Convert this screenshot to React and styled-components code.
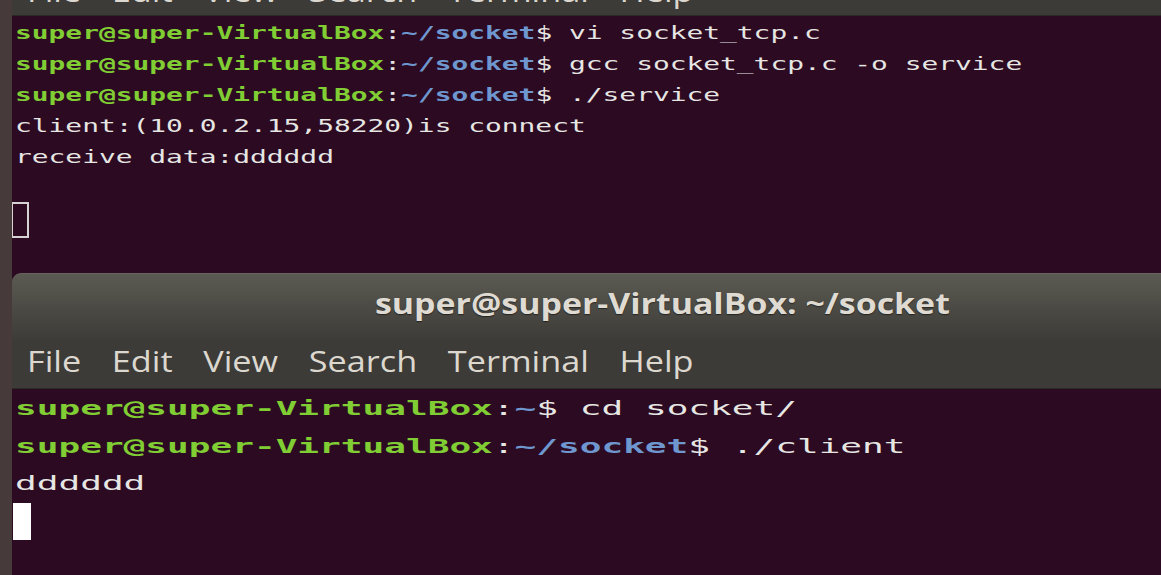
import React from 'react'
import styled, { createGlobalStyle } from 'styled-components'

const GlobalStyle = createGlobalStyle`
  html, body {
    margin: 0;
    padding: 0;
    background: #2c0a22;
    overflow: hidden;
  }
`

const Screen = styled.div`
  display: flex;
  width: 1161px;
  height: 575px;
  overflow: hidden;
  background: #2c0a22;
`

const Strip = styled.div`
  width: 12px;
  flex-shrink: 0;
  background: #463a3a;
`

const Main = styled.div`
  flex: 1;
  display: flex;
  flex-direction: column;
  min-width: 0;
`

const MenuBar = styled.div`
  height: ${p => p.h}px;
  flex-shrink: 0;
  background: #3c3b37;
  overflow: hidden;
  padding-left: 15px;
  border-bottom: 1px solid #2a2a27;
`

const MenuRow = styled.div`
  display: flex;
  align-items: center;
  gap: 26px;
  height: 48px;
  margin-top: ${p => p.shift || 0}px;
  transform: scaleX(1.18);
  transform-origin: left center;
  font-family: "Open Sans", "Noto Sans", sans-serif;
  font-size: 29px;
  color: #dcd8cf;
`

const MenuItem = styled.span`
  white-space: nowrap;
`

const Terminal = styled.div`
  background: #2c0a22;
  overflow: hidden;
  padding: ${p => p.pt}px 0 0 3px;
  height: ${p => (p.h ? `${p.h}px` : 'auto')};
  flex: ${p => (p.h ? '0 0 auto' : '1')};
  box-sizing: border-box;
`

const Line = styled.div`
  height: ${p => p.lh}px;
  line-height: ${p => p.lh}px;
  white-space: pre;
  font-family: "DejaVu Sans Mono", "Liberation Mono", monospace;
  font-size: ${p => p.fs}px;
  color: #e6e6e3;
  transform: scaleX(${p => p.sx});
  transform-origin: left center;
`

const User = styled.span`
  color: #80cd34;
  font-weight: bold;
`

const Path = styled.span`
  color: #6f97cf;
  font-weight: bold;
`

const CursorRow = styled.div`
  height: ${p => p.lh}px;
  display: flex;
  align-items: center;
`

const Cursor = styled.div`
  width: 18px;
  height: ${p => p.h}px;
  margin-left: ${p => p.ml}px;
  box-sizing: border-box;
  background: ${p => (p.filled ? '#ffffff' : 'transparent')};
  border: 2px solid ${p => (p.filled ? '#ffffff' : '#d6d2d4')};
`

const Window = styled.div`
  flex: 1;
  display: flex;
  flex-direction: column;
  min-height: 0;
  background: #2c0a22;
`

const TitleBar = styled.div`
  height: 66px;
  flex-shrink: 0;
  display: flex;
  align-items: center;
  padding-left: 363px;
  border-top-left-radius: 9px;
  border-top: 1px solid #66645c;
  background: linear-gradient(#5b5a52 0%, #4a4943 55%, #3d3c38 100%);
`

const Title = styled.span`
  display: inline-block;
  margin-top: -9px;
  white-space: nowrap;
  font-family: "Open Sans", "Noto Sans", sans-serif;
  font-weight: bold;
  font-size: 28px;
  color: #dfdbd2;
  transform: scaleX(1.21);
  transform-origin: left center;
  text-shadow: 0 1px 1px rgba(0, 0, 0, 0.5);
`

const menu = ['File', 'Edit', 'View', 'Search', 'Terminal', 'Help']

const Menu = ({ h, shift }) => (
  <MenuBar h={h}>
    <MenuRow shift={shift}>
      {menu.map(m => <MenuItem key={m}>{m}</MenuItem>)}
    </MenuRow>
  </MenuBar>
)

const Prompt = ({ path }) => <>
  <User>super@super-VirtualBox</User>:<Path>{path}</Path>$ 
</>

const upper = { lh: 31, fs: 17, sx: 1.64 }
const lower = { lh: 37.5, fs: 19.5, sx: 1.85 }

const App = () => {
  return <>
    <GlobalStyle />
    <Screen>
      <Strip />
      <Main>
        <Menu h={15} shift={-34} />
        <Terminal h={257} pt={2}>
          <Line {...upper}><Prompt path='~/socket' /> vi socket_tcp.c</Line>
          <Line {...upper}><Prompt path='~/socket' /> gcc socket_tcp.c -o service</Line>
          <Line {...upper}><Prompt path='~/socket' /> ./service</Line>
          <Line {...upper}>client:(10.0.2.15,58220)is connect</Line>
          <Line {...upper}>receive data:dddddd</Line>
          <Line {...upper}> </Line>
          <CursorRow lh={31}><Cursor h={36} ml={-4} /></CursorRow>
        </Terminal>
        <Window>
          <TitleBar>
            <Title>super@super-VirtualBox: ~/socket</Title>
          </TitleBar>
          <Menu h={48} shift={-4} />
          <Terminal pt={1}>
            <Line {...lower}><Prompt path='~' /> cd socket/</Line>
            <Line {...lower}><Prompt path='~/socket' /> ./client</Line>
            <Line {...lower}>dddddd</Line>
            <CursorRow lh={37.5}><Cursor h={37} ml={-2} filled /></CursorRow>
          </Terminal>
        </Window>
      </Main>
    </Screen>
  </>
}

export default App
